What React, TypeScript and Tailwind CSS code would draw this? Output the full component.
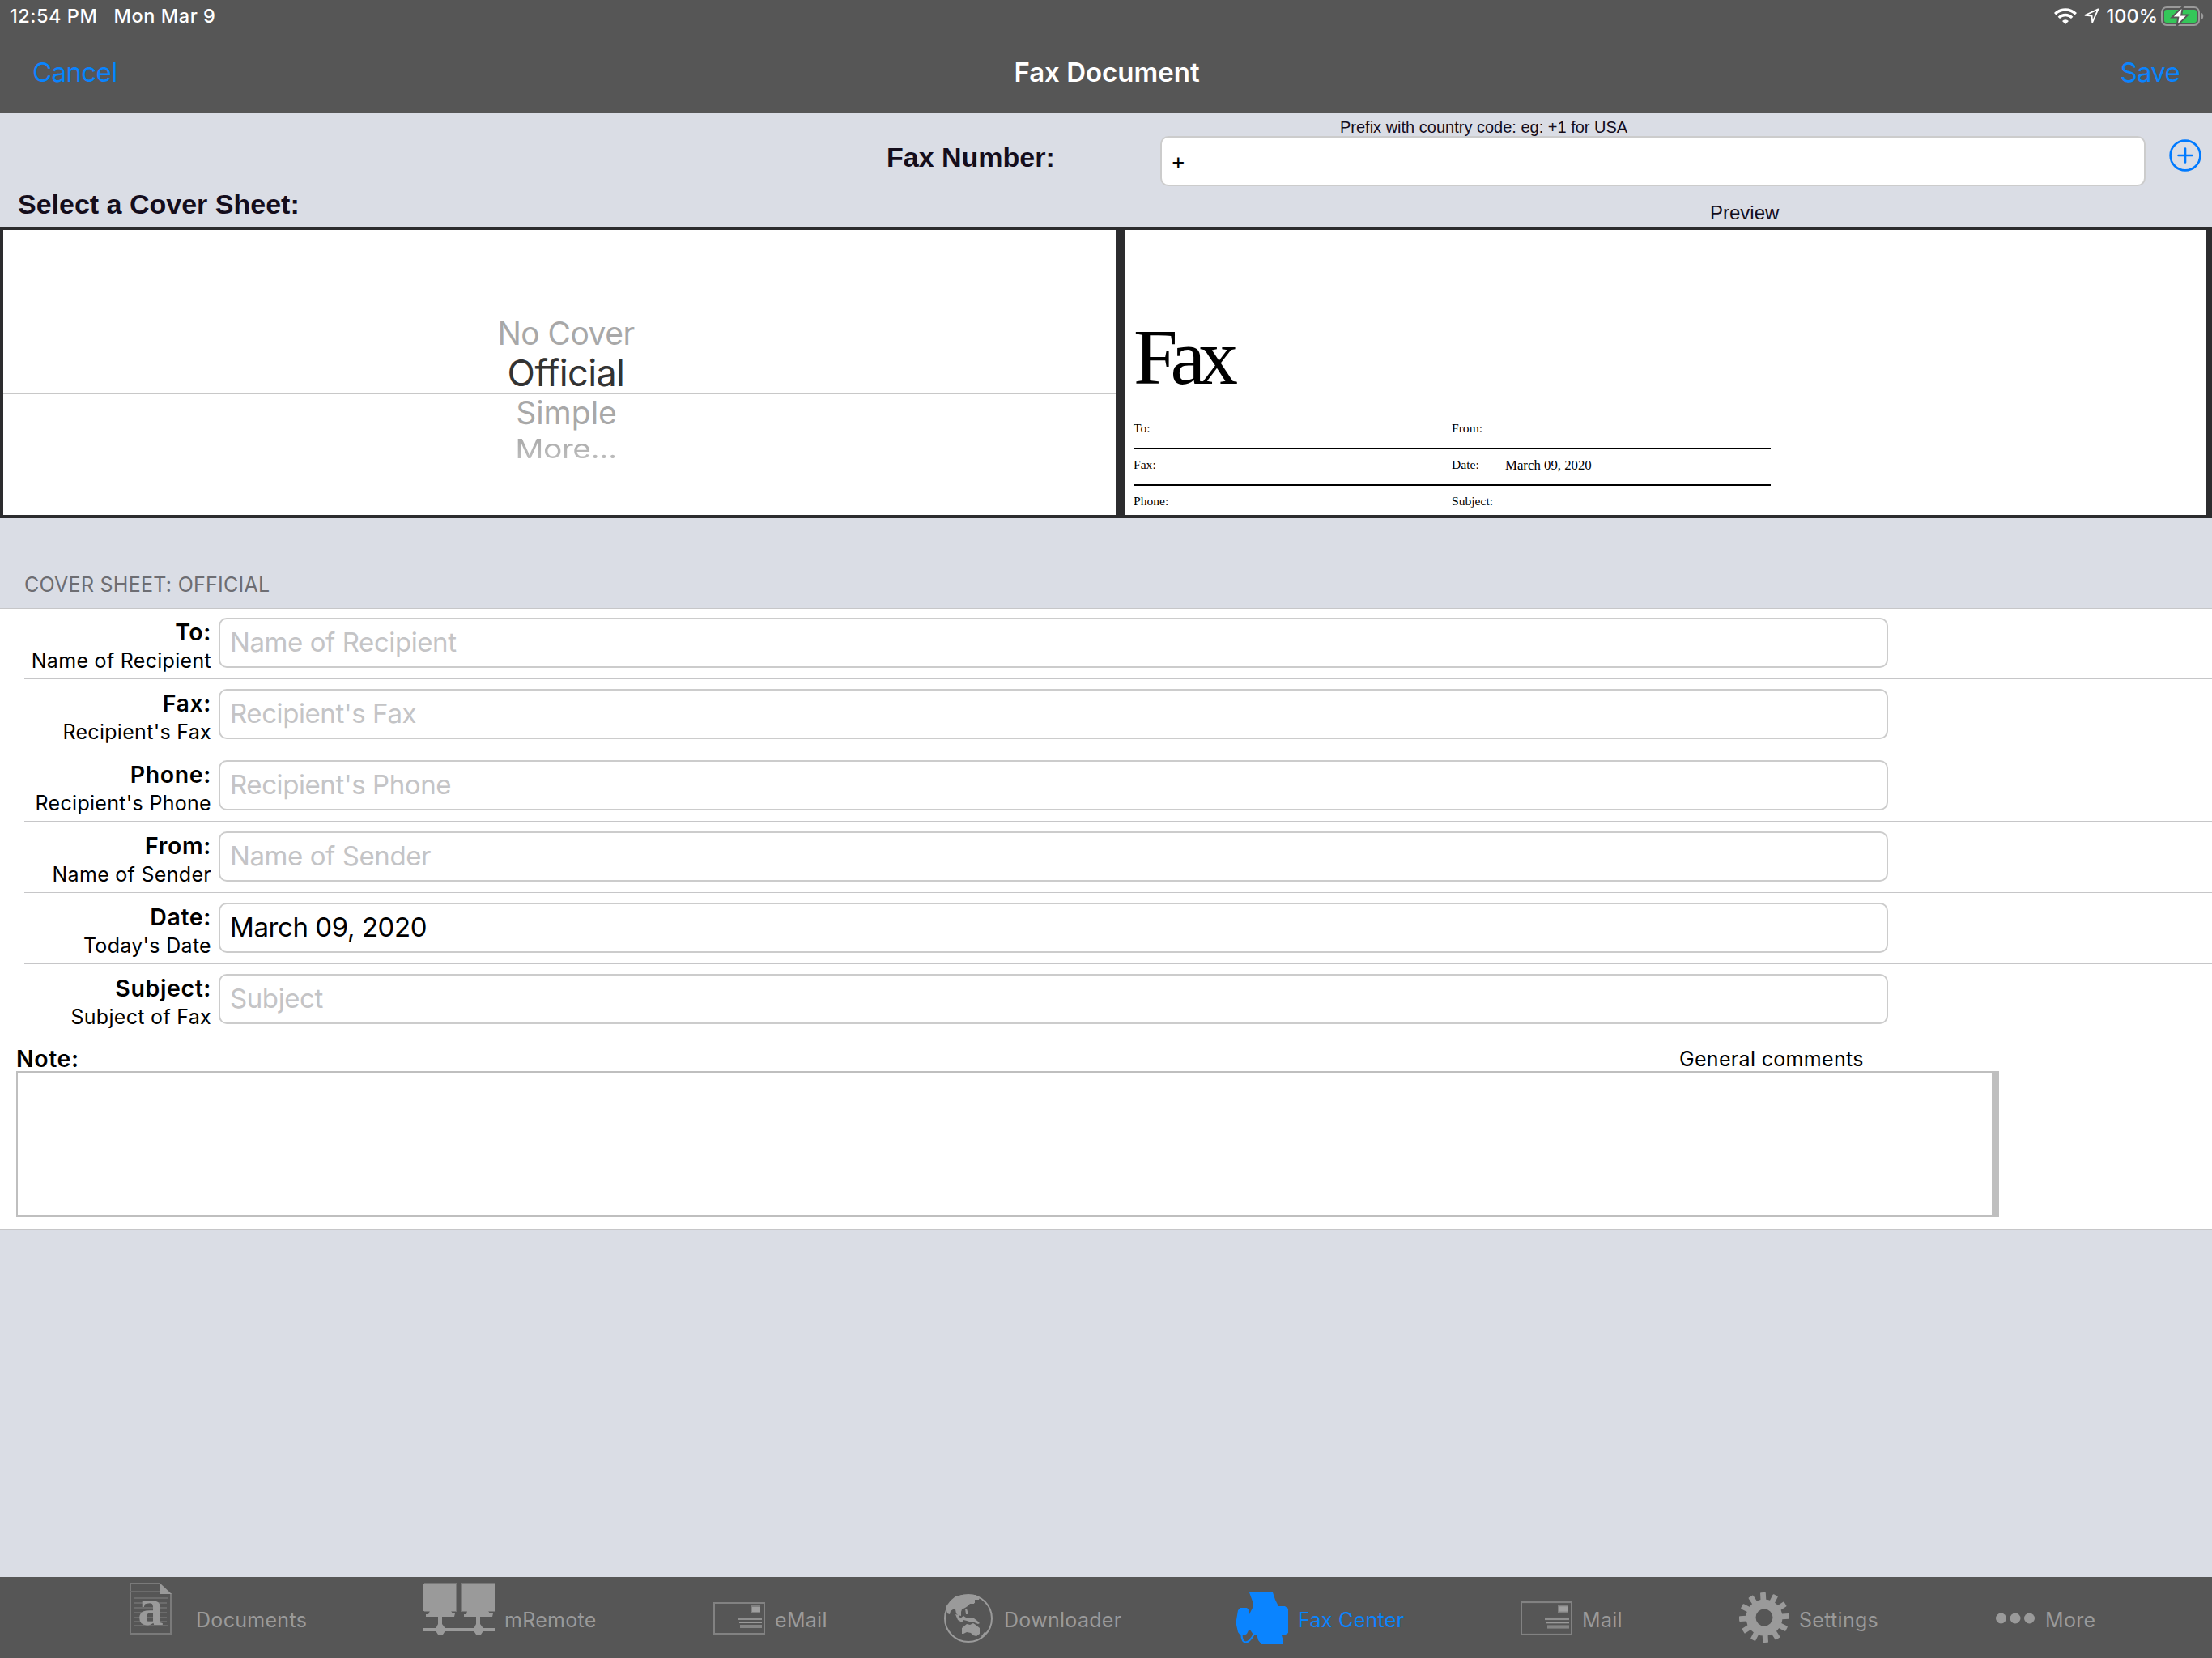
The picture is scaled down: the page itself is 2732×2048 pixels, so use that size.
import React from 'react';

type Field = {
  label: string;
  hint: string;
  placeholder: string;
  value?: string;
};

const fields: Field[] = [
  { label: 'To:', hint: 'Name of Recipient', placeholder: 'Name of Recipient' },
  { label: 'Fax:', hint: "Recipient's Fax", placeholder: "Recipient's Fax" },
  { label: 'Phone:', hint: "Recipient's Phone", placeholder: "Recipient's Phone" },
  { label: 'From:', hint: 'Name of Sender', placeholder: 'Name of Sender' },
  { label: 'Date:', hint: "Today's Date", placeholder: "Today's Date", value: 'March 09, 2020' },
  { label: 'Subject:', hint: 'Subject of Fax', placeholder: 'Subject' },
];

const WifiIcon = () => (
  <svg width="28" height="20" viewBox="0 0 28 20" fill="none" stroke="#fff" strokeWidth="3.4">
    <path d="M1.2 7.2a18.2 18.2 0 0 1 25.6 0" />
    <path d="M5.8 11.9a11.6 11.6 0 0 1 16.4 0" />
    <path d="M14 20l-4-4.1a5.7 5.7 0 0 1 8 0z" fill="#fff" stroke="none" />
  </svg>
);

const LocationIcon = () => (
  <svg width="19" height="19" viewBox="0 0 19 19" fill="none" stroke="#fff" strokeWidth="1.8" strokeLinejoin="round">
    <path d="M17.4 1.4L1.4 8.8l8.2.7.6 8.2z" />
  </svg>
);

const BatteryIcon = () => (
  <svg width="53" height="26" viewBox="0 0 53 26">
    <rect x="1" y="2" width="46" height="22" rx="6" fill="none" stroke="#9a9a9a" strokeWidth="2" />
    <path d="M50 9c3 1 3 7 0 8z" fill="#9a9a9a" />
    <rect x="4" y="5" width="40" height="16" rx="3" fill="#34c759" />
    <path
      d="M27 1L13.5 14.4h7.8L19.5 25 33 11.6h-7.8z"
      fill="#fff"
      stroke="#565656"
      strokeWidth="2"
    />
  </svg>
);

const AddIcon = () => (
  <svg width="40" height="40" viewBox="0 0 40 40" fill="none" stroke="#007aff" strokeWidth="2.6" strokeLinecap="round">
    <circle cx="20" cy="20" r="18.4" />
    <path d="M20 11.5v17M11.5 20h17" />
  </svg>
);

const DocumentsIcon = () => (
  <svg width="52" height="64" viewBox="0 0 52 64" className="overflow-visible">
    <path d="M37 1H1v62h50V13" fill="none" stroke="#7a7a7a" strokeWidth="2" />
    <path d="M1 11h36M5 19h42M6 25h40M6 31h40M6 37h40M6 43h40M6 48h40M6 53h41" stroke="#6c6c6c" strokeWidth="2" />
    <path d="M37 0l15 14H37z" fill="#9a9a9a" />
    <text
      x="26"
      y="52"
      textAnchor="middle"
      fontSize="63"
      fontWeight="700"
      fill="#9a9a9a"
      fontFamily="'Liberation Serif', serif"
    >
      a
    </text>
  </svg>
);

const RemoteIcon = () => (
  <svg width="88" height="64" viewBox="0 0 88 64" fill="#9a9a9a">
    <path d="M1 0h41v36H1zM46 0h42v36H46z" fill="#787878" />
    <path d="M0 2h40v33H0zM48 2h40v33H48z" />
    <path d="M8 35h26l2 3h3l-1 4H3v-3h3zM54 35h26l2 3h4l-1 4H50v-3h3z" />
    <path d="M18 42h5v9l3 4v6l-2 3h-6l-2-3v-6l2-4zM65 42h5v9l3 4v6l-2 3h-6l-2-3v-6l2-4z" />
    <path d="M0 56h88v4H0z" />
  </svg>
);

const EnvelopeIcon = ({ height }: { height: number }) => (
  <svg width="64" height={height} viewBox="0 0 64 40" preserveAspectRatio="none">
    <rect x="1" y="1" width="62" height="38" fill="none" stroke="#828282" strokeWidth="2" />
    <rect x="46" y="4" width="12" height="10" fill="#808080" />
    <rect x="48" y="6" width="10" height="6" fill="#9f9f9f" />
    <path d="M30 19h30v3H30z" fill="#8f8f8f" />
    <path d="M32 24h28v2H32z" fill="#9a9a9a" />
    <path d="M33 28h27v4H33z" fill="#858585" />
  </svg>
);

const GlobeIcon = () => (
  <svg width="60" height="60" viewBox="0 0 60 60" fill="#9a9a9a">
    <circle cx="30" cy="30" r="29" fill="none" stroke="#9a9a9a" strokeWidth="2" />
    <path d="M22 1h17l5 3-1 3h-5l-1 5h-5l-3 3-3 2-4 2-1 3v5l-4-1-2-2-1-5H11l-3 2-1 4-3-1-2-8 6-8 6-5z" />
    <path d="M34 6l4 1v4l-4 1-2-3zM26 18h2l2 7h-3zM14 25l4 1 2 4 4-3 3 2 5 1 5 0 4 3 3 3-2 1-7-3-4 0-3-1-4-1-2 3-5-3z" />
    <path d="M28 37l4 1 4-2 3 2 5 4v7l-4 3-4-1-3-3-5-1-4 2h-2v-7z" />
    <path d="M50 47l3 1-3 3-3 2-1-1z" />
  </svg>
);

const FaxIcon = () => (
  <svg width="64" height="64" viewBox="0 0 64 64" fill="#0a84ff">
    <path d="M16 0h29l3 9 4 8h8l4 3v30l-3 2-5 1 2 7-1 4H31l-4-5-1.500-6-4.500-1-3.500-5H15l-2 4-3 2H5l-3-4-2-9V34l2-12 3-3h8l2 2 1 6 1.500-3 3.500-7-1-6z" />
    <path d="M6.500 52c0 5 1 9 5 9.500 4 0 7-4 10-9.500" fill="none" stroke="#0a84ff" strokeWidth="2.200" />
  </svg>
);

const TEETH = [0, 30, 60, 90, 120, 150, 180, 210, 240, 270, 300, 330];

const GearIcon = () => (
  <svg width="62" height="62" viewBox="-31 -31 62 62" fill="#9a9a9a">
    {TEETH.map(angle => (
      <rect key={angle} x="-3.400" y="-31" width="6.800" height="14" rx="1" transform={`rotate(${angle - 3})`} />
    ))}
    <circle r="16.500" fill="none" stroke="#9a9a9a" strokeWidth="12" />
  </svg>
);

const DotsIcon = () => (
  <svg width="48" height="14" viewBox="0 0 48 14" fill="#9a9a9a">
    <circle cx="6.500" cy="7" r="6.500" />
    <circle cx="24" cy="7" r="6.500" />
    <circle cx="41.500" cy="7" r="6.500" />
  </svg>
);

// Tabs are not evenly spread, so every one carries its own width and icon gap.
const tabs = [
  { name: 'Documents', icon: <DocumentsIcon />, box: 'w-[363px] gap-[30px]', lift: 'pt-[7px]' },
  { name: 'mRemote', icon: <RemoteIcon />, box: 'w-[358px] gap-[12px]', lift: 'pt-[7px]' },
  { name: 'eMail', icon: <EnvelopeIcon height={40} />, box: 'w-[285px] gap-[12px]', lift: 'pt-[31px]' },
  { name: 'Downloader', icon: <GlobeIcon />, box: 'w-[361px] gap-[14px]', lift: 'pt-[21px]' },
  { name: 'Fax Center', icon: <FaxIcon />, box: 'w-[351px] gap-[12px]', lift: 'pt-[19px]', active: true },
  { name: 'Mail', icon: <EnvelopeIcon height={42} />, box: 'w-[270px] gap-[12px]', lift: 'pt-[30px]' },
  { name: 'Settings', icon: <GearIcon />, box: 'w-[317px] gap-[12px]', lift: 'pt-[19px]' },
  { name: 'More', icon: <DotsIcon />, box: 'w-[200px] gap-[13px]', lift: 'pt-[44px]' },
];

const Header = () => (
  <header className="h-[140px] bg-[#565656]">
    <div className="flex h-[39px] items-center justify-between pl-[12px] pr-[10px] text-[23.5px] font-medium text-white">
      <div className="flex gap-[20px] tracking-[0.55px]">
        <span>12:54 PM</span>
        <span>Mon Mar 9</span>
      </div>
      <div className="flex items-center">
        <WifiIcon />
        <span className="ml-[9px]"><LocationIcon /></span>
        <span className="ml-[9px]">100%</span>
        <span className="ml-[4px]"><BatteryIcon /></span>
      </div>
    </div>
    <nav className="grid h-[101px] grid-cols-3 items-center pt-px pr-[40px] pl-[40px] text-[33px]">
      <button type="button" className="text-left tracking-[-0.6px] text-[#0a84ff]">Cancel</button>
      <h1 className="pl-[2px] text-center font-semibold text-white">Fax Document</h1>
      <button type="button" className="text-right tracking-[-0.7px] text-[#0a84ff]">Save</button>
    </nav>
  </header>
);

const NumberBar = () => (
  <section className="flex h-[140px] font-['Liberation_Sans',sans-serif] text-[#140d1c]">
    <div className="w-[1433px] pt-[34px] text-[34px] leading-10 font-bold">
      <div className="pl-[1095px]">Fax Number:</div>
      <h2 className="mt-[18px] pl-[22px]">Select a Cover Sheet:</h2>
    </div>
    <div className="w-[1217px] pt-[7px]">
      <div className="pl-[222px] text-[20px] leading-[21px]">Prefix with country code: eg: +1 for USA</div>
      <div className="flex h-[62px] items-center rounded-[10px] border-2 border-[#ccc] bg-white pl-[11px] font-['Inter',sans-serif] text-[28px] text-black">
        +
      </div>
      <div className="mt-[21px] pl-[679px] text-[24px] leading-6">Preview</div>
    </div>
    <div className="pt-[32px] pl-[29px]">
      <AddIcon />
    </div>
  </section>
);

const CoverPicker = () => (
  <div className="flex w-[1374px] flex-col bg-white pt-[105px] text-center text-[39px] text-[#a8a8a8]">
    <div className="h-[44px] pl-[16px] leading-[46px] tracking-[-0.55px]">No Cover</div>
    <div className="h-[54px] border-y border-[#c8c8c8] pl-[16px] text-[45px] leading-[53px] tracking-[-0.6px] text-[#333]">Official</div>
    <div className="h-[44px] pl-[17px] leading-[46px]">Simple</div>
    <div className="h-[44px] scale-y-[0.82] bg-gradient-to-b from-[#a6a6a6] to-[#c0c0c0] bg-clip-text pl-[16px] leading-[48px] tracking-[-0.5px] text-transparent">
      More...
    </div>
  </div>
);

const PreviewRow = ({ left, right, value }: { left: string; right: string; value?: string }) => (
  <div className="flex h-[45px] w-[787px] border-b-2 border-black pt-[11px] leading-4 last:border-b-0">
    <span className="w-[393px]">{left}</span>
    <span className="w-[66px]">{right}</span>
    {value && <span className="mt-px text-[16.8px]">{value}</span>}
  </div>
);

const CoverPreview = () => (
  <div className="w-[1336px] overflow-hidden bg-white pt-[97px] pl-[11px] font-['Liberation_Serif',serif] text-[15.6px] text-black">
    <div className="mb-[9px] h-[120px] text-[98px] leading-[120px] tracking-[-9px]">Fax</div>
    <PreviewRow left="To:" right="From:" />
    <PreviewRow left="Fax:" right="Date:" value="March 09, 2020" />
    <PreviewRow left="Phone:" right="Subject:" />
  </div>
);

const FieldRow = ({ field }: { field: Field }) => (
  <div className="ml-[30px] flex h-[88px] gap-[9px] border-b border-[#c6c6c8] pt-[12px] first:h-[87px] first:pt-[11px]">
    <div className="w-[231px] text-right whitespace-nowrap">
      <div className="text-[28.5px] leading-9 font-semibold tracking-[0.6px]">{field.label}</div>
      <div className="text-[25px] leading-[34px] tracking-[0.3px]">{field.hint}</div>
    </div>
    <div className="flex h-[62px] w-[2062px] items-center rounded-[10px] border-2 border-[#ccc] pl-[12px] text-[33px] tracking-[-0.42px]">
      {field.value
        ? <span className="text-black">{field.value}</span>
        : <span className="text-[#c4c4c6]">{field.placeholder}</span>}
    </div>
  </div>
);

const TabBar = () => (
  <footer className="flex h-[100px] bg-[#565656] pl-[160px]">
    {tabs.map(tab => (
      <div key={tab.name} className={`flex shrink-0 ${tab.box} ${tab.active ? 'text-[#0a84ff]' : 'text-[#9a9a9a]'}`}>
        <span className={tab.lift}>{tab.icon}</span>
        <span className="pt-[38px] text-[25px] leading-[30px] tracking-[0.3px] whitespace-nowrap">{tab.name}</span>
      </div>
    ))}
  </footer>
);

export default function App() {
  return (
    <div className="flex h-[2048px] w-[2732px] flex-col overflow-hidden bg-[#dadde5] font-['Inter',sans-serif] text-black">
      <Header />
      <NumberBar />

      <section className="flex h-[360px] gap-[11px] border-y-4 border-l-4 border-[#2c2c2e] bg-[#2c2c2e]">
        <CoverPicker />
        <CoverPreview />
      </section>

      <h3 className="h-[111px] pt-[67px] pl-[30px] text-[25px] leading-[30px] tracking-[0.27px] text-[#6d6d72]">
        COVER SHEET: OFFICIAL
      </h3>

      <section className="border-y border-[#c6c6c8] bg-white">
        <div>
          {fields.map(field => <FieldRow key={field.label} field={field} />)}
        </div>
        <div className="h-[239px] pt-[14px] pl-[20px]">
          <div className="flex h-[30px] leading-[30px]">
            <span className="w-[2054px] text-[28.5px] font-semibold tracking-[0.6px]">Note:</span>
            <span className="text-[25px] tracking-[0.32px]">General comments</span>
          </div>
          <div className="h-[180px] w-[2449px] border-2 border-r-[9px] border-[#bfbfbf]" />
        </div>
      </section>

      <div className="grow" />
      <TabBar />
    </div>
  );
}
